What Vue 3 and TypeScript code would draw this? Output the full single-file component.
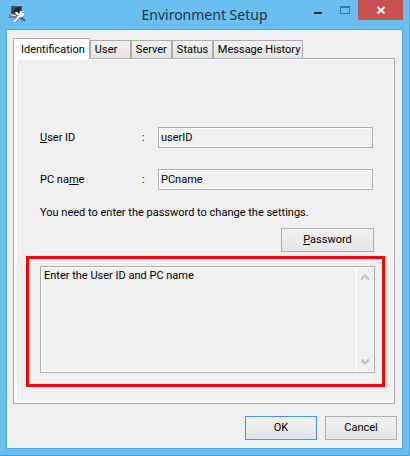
<script setup lang="ts">
import { ref } from 'vue'

const tabs: string[] = ['Identification', 'User', 'Server', 'Status', 'Message History']
const active = ref<string>('Identification')
const userId = ref<string>('userID')
const pcName = ref<string>('PCname')
const hint = ref<string>('Enter the User ID and PC name')
const hintBox = ref<HTMLTextAreaElement | null>(null)

function scrollHint(amount: number): void {
  hintBox.value?.scrollBy({ top: amount })
}
</script>

<template>
  <main class="window">
    <header class="titlebar">
      <svg class="app-icon" viewBox="0 0 17 18" aria-hidden="true">
        <path d="M2 1h11v8H2z" fill="#55535f" />
        <path d="M3 2h9v6H3z" fill="#2b2a35" />
        <path d="M3 2h5L3 7z" fill="#4c4a58" />
        <path d="M1 9h11v4H1z" fill="#9896a2" />
        <path d="M0 10h7v3H0z" fill="#77757f" />
        <path d="M2 10h5v1H2z" fill="#d6d4dc" />
        <path d="M7 8l6 6" stroke="#39404c" stroke-width="3" />
        <path d="M6 7l2 0 5 5-1 2-5-5z" fill="#fff" />
        <path d="M12 12l4 4" stroke="#1c6dbd" stroke-width="2" />
        <path d="M6 16l6-7" stroke="#4a4a50" stroke-width="3" />
        <path d="M6 16l6-7" stroke="#fff" stroke-width="2" />
        <path d="M11 6h2v2h2v2l-2 2h-2l-1-2z" fill="#f5f5f5" />
        <path d="M14 6h1v1h-1zM5 15h1v2H5z" fill="#fff" />
      </svg>
      <h1 class="title">Environment Setup</h1>
      <div class="controls">
        <button class="control" type="button" aria-label="Minimize">
          <svg viewBox="0 0 10 8" class="glyph"><path d="M1 6h8v2H1z" fill="#222b31" /></svg>
        </button>
        <button class="control" type="button" aria-label="Maximize">
          <svg viewBox="0 0 10 8" class="glyph">
            <path d="M0 0h10v8H0zM1 2v5h8V2z" fill="#3f7592" fill-rule="evenodd" />
          </svg>
        </button>
        <button class="control close" type="button" aria-label="Close">
          <svg viewBox="0 0 10 8" class="glyph">
            <path d="M1.5 1l7 6.5M8.500 1l-7 6.500" stroke="#fff" stroke-width="2" />
          </svg>
        </button>
      </div>
    </header>

    <form class="client" @submit.prevent>
      <div class="tabs" role="tablist">
        <button
          v-for="tab in tabs"
          :key="tab"
          class="tab"
          :class="{ selected: tab === active }"
          type="button"
          role="tab"
          :aria-selected="tab === active"
          @click="active = tab"
        >{{ tab }}</button>
      </div>

      <section class="panel" role="tabpanel">
        <div class="page">
          <div class="fields">
            <div class="field">
              <label for="user-id"><u>U</u>ser ID</label>
              <span>:</span>
              <input id="user-id" v-model="userId" type="text" readonly />
            </div>
            <div class="field">
              <label for="pc-name">PC na<u>m</u>e</label>
              <span>:</span>
              <input id="pc-name" v-model="pcName" type="text" readonly />
            </div>
          </div>
          <p class="note">You need to enter the password to change the settings.</p>
          <div class="password-row">
            <button class="button password" type="button"><span><u>P</u>assword</span></button>
          </div>
          <div class="highlight">
            <div class="memo">
              <textarea ref="hintBox" v-model="hint" aria-label="Description" readonly></textarea>
              <div class="scroll">
                <button type="button" aria-label="Scroll up" @click="scrollHint(-16)">
                  <svg viewBox="0 0 8 6" class="arrow"><path d="M0 6V4l4-4 4 4v2H7L4 3 1 6z" fill="#bfbfbf" /></svg>
                </button>
                <button type="button" aria-label="Scroll down" @click="scrollHint(16)">
                  <svg viewBox="0 0 8 6" class="arrow"><path d="M0 0v2l4 4 4-4V0H7L4 3 1 0z" fill="#bfbfbf" /></svg>
                </button>
              </div>
            </div>
          </div>
        </div>
      </section>

      <footer class="actions">
        <button class="button primary" type="submit">OK</button>
        <button class="button" type="button">Cancel</button>
      </footer>
    </form>
  </main>
</template>

<style>
body {
  margin: 0;
}
</style>

<style scoped>
* {
  box-sizing: border-box;
}

.window {
  display: flex;
  flex-direction: column;
  min-height: 100vh;
  padding: 0 6px 6px;
  border: solid #4f9bc9;
  border-width: 0 1px 1px 0;
  background: #6bbff0;
  color: #000;
  font: 11px/16px Roboto, "Liberation Sans", sans-serif;
}

button,
input,
textarea {
  margin: 0;
  color: inherit;
  font: inherit;
}

.titlebar {
  display: grid;
  grid-template-columns: 98px 1fr 98px;
  height: 29px;
}

.app-icon {
  width: 17px;
  height: 18px;
  margin: 5px 0 0 3px;
}

.title {
  margin: 0;
  color: #1d3442;
  font: 400 14px/29px "Noto Sans", "Open Sans", sans-serif;
  text-align: center;
  white-space: nowrap;
}

.controls {
  display: flex;
  justify-content: flex-end;
}

.control {
  display: flex;
  justify-content: center;
  width: 27px;
  height: 20px;
  padding: 6px 0 0;
  border: 0;
  background: none;
}

.close {
  width: 45px;
  background: #c75050;
}

.glyph {
  width: 10px;
  height: 8px;
}

.client {
  display: flex;
  flex: 1;
  flex-direction: column;
  padding: 8px 0 0;
  border: 1px solid #5aa5d2;
  background: #f0f0f0;
}

.tabs {
  display: flex;
  align-items: flex-end;
  height: 20px;
  padding: 0 6px;
}

.tab {
  min-width: 41px;
  height: 18px;
  padding: 0 2px 0 4px;
  border: 1px solid #acacac;
  border-bottom: 0;
  background: linear-gradient(#f0f0f0, #e5e5e5);
  line-height: 17px;
  text-align: left;
  white-space: nowrap;
}

.tab.selected {
  z-index: 1;
  align-self: flex-start;
  height: 21px;
  padding: 0 4px 0 7px;
  background: #fff;
  line-height: 19px;
}

.panel {
  display: flex;
  flex: 1;
  margin: 0 7px 0 6px;
  padding: 1px 1px 2px 3px;
  border: 1px solid #acacac;
  background: #fff;
}

.page {
  display: flex;
  flex: 1;
  flex-direction: column;
  padding: 67px 8px 14px 9px;
  background: #f0f0f0;
}

.fields {
  display: grid;
  gap: 21px;
  padding: 0 12px 0 14px;
}

.field {
  display: grid;
  grid-template-columns: 102px 16px 1fr;
  align-items: center;
}

.field input {
  width: 100%;
  min-width: 0;
  height: 21px;
  padding: 0 2px;
  border: 1px solid #abadb3;
  outline: 1px solid #fff;
  outline-offset: -2px;
  background: #f0f0f0;
}

.note {
  margin: 15px 14px 7px;
}

.password-row {
  display: flex;
  justify-content: flex-end;
  padding: 0 11px;
}

.button {
  width: 72px;
  height: 24px;
  padding: 0;
  border: 1px solid #acacac;
  background: linear-gradient(#f0f0f0, #e5e5e5);
}

.password {
  width: 93px;
}

.primary {
  border-color: #3399ff;
}

.highlight {
  display: flex;
  flex: 1;
  margin-top: 4px;
  padding: 7px 7px 11px 11px;
  border: 3px solid #f00;
}

.memo {
  display: flex;
  flex: 1;
  padding: 1px;
  border: 1px solid #abadb3;
  background: #fff;
}

.memo textarea {
  flex: 1;
  min-width: 0;
  padding: 0 2px;
  border: 0;
  outline: 0;
  background: #f0f0f0;
  resize: none;
  scrollbar-width: none;
}

.scroll {
  display: flex;
  flex-direction: column;
  justify-content: space-between;
  width: 16px;
  margin-left: 1px;
  background: #f0f0f0;
}

.scroll button {
  display: flex;
  align-items: center;
  justify-content: center;
  height: 18px;
  padding: 0;
  border: 0;
  background: none;
}

.arrow {
  width: 8px;
  height: 6px;
}

.actions {
  display: flex;
  justify-content: flex-end;
  gap: 8px;
  padding: 12px 5px 8px;
}
</style>
